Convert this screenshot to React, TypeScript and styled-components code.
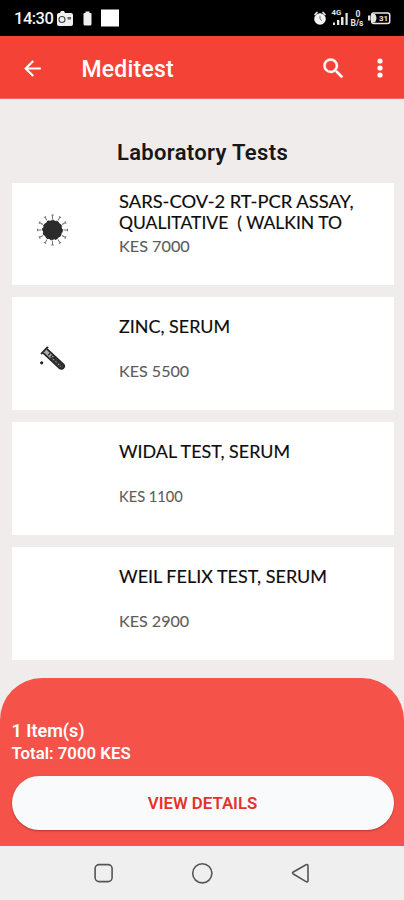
import React from 'react';
import styled, { createGlobalStyle } from 'styled-components';

const GlobalStyle = createGlobalStyle`
  * { box-sizing: border-box; }
  body { margin: 0; background: #efeceb; font-family: Roboto, sans-serif; }
`;

const Screen = styled.div`
  display: flex;
  flex-direction: column;
  width: 404px;
  height: 900px;
  overflow: hidden;
  background: #efeceb;
`;

const StatusBar = styled.div`
  display: flex;
  justify-content: space-between;
  height: 36px;
  flex: none;
  background: #000;
  color: #f4f4f4;
`;

const StatusGroup = styled.div`
  display: flex;
  align-items: center;
  height: 36px;
`;

const Clock = styled.span`
  width: 42px;
  margin-left: 14px;
  font-size: 16.5px;
  line-height: 38px;
  padding-top: 2px;
  font-weight: 500;
  letter-spacing: -0.5px;
  white-space: nowrap;
`;

const AppBar = styled.header`
  display: flex;
  align-items: center;
  height: 63px;
  flex: none;
  padding: 2px 14px 0 20px;
  background: #f44336;
  border-bottom: 1px solid #f2695d;
  color: #fff;
`;

const AppTitle = styled.h1`
  flex: 1;
  margin: 3px 0 0 36.5px;
  font-size: 23px;
  font-weight: 500;
  line-height: 28px;
  letter-spacing: 0.2px;
`;

const SearchIcon = styled.svg`
  margin-right: 23.5px;
`;

const Content = styled.main`
  flex: none;
  height: 579px;
  padding: 37px 10.5px 0 11.5px;
`;

const Heading = styled.h2`
  margin: 0 0 15px;
  height: 32px;
  line-height: 33px;
  text-align: center;
  font-size: 22px;
  font-weight: 600;
  letter-spacing: 0.33px;
  color: #171717;
`;

const List = styled.div`
  display: flex;
  flex-direction: column;
  gap: 11.5px;
`;

const Card = styled.article<{ $compact?: boolean }>`
  display: flex;
  height: ${p => (p.$compact ? 102 : 113.5)}px;
  background: #fff;
`;

const Thumb = styled.div<{ $compact?: boolean }>`
  width: 107px;
  flex: none;
  padding: ${p => (p.$compact ? '29px 0 0 23px' : '49px 0 0 26px')};
`;

const Details = styled.div<{ $compact?: boolean }>`
  display: flex;
  flex-direction: column;
  gap: ${p => (p.$compact ? 2 : 23)}px;
  padding-top: ${p => (p.$compact ? 8 : 19)}px;
`;

const TestName = styled.div`
  display: flex;
  flex-direction: column;
`;

const Line = styled.span<{ $stretch: number }>`
  height: 21px;
  line-height: 22px;
  font-family: Lato, sans-serif;
  font-size: 16.8px;
  font-weight: 400;
  color: #0c0c0c;
  -webkit-text-stroke: 0.15px #0c0c0c;
  white-space: pre;
  transform: scaleX(${p => p.$stretch});
  transform-origin: left;
`;

const Price = styled.span<{ $stretch: number }>`
  height: 22px;
  line-height: 23px;
  font-family: Lato, sans-serif;
  font-size: 14.5px;
  color: #5c5c5c;
  -webkit-text-stroke: 0.1px #5c5c5c;
  white-space: pre;
  transform: scaleX(${p => p.$stretch});
  transform-origin: left;
`;

const CartSheet = styled.section`
  height: 168px;
  flex: none;
  padding: 41px 10.5px 0 11.5px;
  background: #f5534a;
  border-radius: 42px 42px 0 0;
  color: #fff;
`;

const CartLine = styled.div<{ $size: number }>`
  height: 23px;
  line-height: 23px;
  font-size: ${p => p.$size}px;
  font-weight: 600;
`;

const ViewButton = styled.button`
  display: block;
  width: 100%;
  height: 54.5px;
  margin-top: 10.5px;
  padding: 0;
  border: 0;
  border-radius: 28px;
  background: #f8fafc;
  box-shadow: 0 1px 2px rgba(110, 20, 10, 0.45);
  color: #e6332a;
  font: 600 16.8px Roboto, sans-serif;
`;

const NavBar = styled.nav`
  display: flex;
  justify-content: center;
  align-items: center;
  gap: 75px;
  height: 54px;
  flex: none;
  background: #efefef;
`;

const Virus = () => (
  <svg width="36" height="36" viewBox="-17.5 -18 36 36">
    <g stroke="#777" strokeWidth="1" fill="none">
      {Array.from({ length: 12 }, (_, i) => (
        <path key={i} d="M0-11V-15M-1.3-15H1.3" transform={`rotate(${i * 30})`} />
      ))}
    </g>
    <circle r="9.8" fill="#2b2b2b" stroke="#111" strokeWidth="1" strokeDasharray="2.6 2.4" />
  </svg>
);

const Tube = () => (
  <svg width="30" height="28" viewBox="0 0 30 28">
    <g transform="translate(6.5 4.5) rotate(43)">
      <path d="M0-5V5" stroke="#222" strokeWidth="2" />
      <path d="M1-2.8H23A2.8 2.8 0 0 1 23 2.8H1" fill="#aaa" stroke="#222" strokeWidth="1.7" />
      <path d="M11-2.5H23A2.5 2.5 0 0 1 23 2.5H9Z" fill="#333" />
      <path d="M6-2V1M9-2V1M13-2V1M17-2V1" stroke="#222" strokeWidth="1.2" />
      <path d="M12 0.5H23" stroke="#aaa" strokeWidth="1" strokeDasharray="1.5 2" />
    </g>
    <circle cx="3.7" cy="16.8" r="1.6" fill="#222" />
  </svg>
);

const LeftStatusIcons = () => (
  <svg width="66" height="22" viewBox="0 0 66 22" fill="#f0f0f0">
    <path d="M1 8Q1 6 3 6H4L5 4H8L9 6H15Q17 6 17 8V17Q17 19 15 19H3Q1 19 1 17Z" />
    <circle cx="6" cy="12.5" r="3" fill="none" stroke="#444" strokeWidth="1.1" />
    <path d="M11.5 10H15V12.5H11.5Z" fill="#666" />
    <path d="M29.5 4.5H33.5V6H34.5Q35.5 6 35.5 7V17Q35.5 18.5 34 18.5H29Q27.5 18.5 27.5 17V7Q27.5 6 28.5 6H29.5Z" />
    <path d="M45 2.5H63V19.5H45Z" fill="#fff" />
  </svg>
);

const RightStatusIcons = () => (
  <svg width="91" height="36" viewBox="313 0 91 36" fill="#e4e4e4">
    <circle cx="320" cy="19" r="5.8" fill="#f4f4f4" />
    <path d="M314.5 15L317.5 12M322.5 12L325.5 15" stroke="#eee" strokeWidth="1.6" />
    <path d="M320 15.5V19L322 20.5" fill="none" stroke="#777" strokeWidth="1" />
    <text x="331.5" y="15.2" fontFamily="Roboto, sans-serif" fontSize="7.8" fontWeight="700">4G</text>
    <path d="M333 22.5H335V25H333ZM337 20H339.3V25H337ZM341 17H343.5V25H341ZM345.5 13H347.7V25H345.5Z" />
    <text x="355.5" y="17.4" fontFamily="Roboto, sans-serif" fontSize="8.5" fontWeight="700">0</text>
    <text x="350.5" y="26" fontFamily="Roboto, sans-serif" fontSize="8.5" fontWeight="700">B/s</text>
    <path d="M368 15.5H370.5V20.5H368Z" />
    <rect x="371.7" y="13" width="18" height="10.5" rx="2" fill="none" stroke="#e8e8e8" strokeWidth="1.5" />
    <path d="M372 14H375Q378 18 375 22.5H372Z" />
    <text x="379" y="21.3" fontFamily="Roboto, sans-serif" fontSize="8" fontWeight="700">31</text>
  </svg>
);

const tests = [
  { name: [{ text: 'SARS-COV-2 RT-PCR ASSAY,', stretch: 1.094 }, { text: 'QUALITATIVE  ( WALKIN TO', stretch: 1.043 }], price: 'KES 7000', priceStretch: 1.12, icon: <Virus />, compact: true },
  { name: [{ text: 'ZINC, SERUM', stretch: 1.067 }], price: 'KES 5500', priceStretch: 1.11, icon: <Tube /> },
  { name: [{ text: 'WIDAL TEST, SERUM', stretch: 1.066 }], price: 'KES 1100', priceStretch: 1.01 },
  { name: [{ text: 'WEIL FELIX TEST, SERUM', stretch: 1.072 }], price: 'KES 2900', priceStretch: 1.11 },
];

export default function App() {
  return (
    <>
      <GlobalStyle />
      <Screen>
        <StatusBar>
          <StatusGroup>
            <Clock>14:30</Clock>
            <LeftStatusIcons />
          </StatusGroup>
          <StatusGroup>
            <RightStatusIcons />
          </StatusGroup>
        </StatusBar>
        <AppBar>
          <svg width="25" height="25" viewBox="0 0 24 24" fill="#fff">
            <path d="M20 11H7.83l5.59-5.59L12 4l-8 8 8 8 1.41-1.41L7.83 13H20v-2z" />
          </svg>
          <AppTitle>Meditest</AppTitle>
          <SearchIcon width="27" height="27" viewBox="0 0 24 24" fill="#fff" stroke="#fff" strokeWidth="0.3">
            <path d="M15.5 14h-.79l-.28-.27A6.47 6.47 0 0 0 16 9.5 6.5 6.5 0 1 0 9.5 16c1.61 0 3.09-.59 4.23-1.57l.27.28v.79l5 4.99L20.49 19l-4.99-5zm-6 0C7.01 14 5 11.99 5 9.5S7.01 5 9.5 5 14 7.01 14 9.5 11.99 14 9.5 14z" />
          </SearchIcon>
          <svg width="20" height="28" viewBox="0 0 20 28" fill="#fff">
            <circle cx="10" cy="7" r="2.6" />
            <circle cx="10" cy="14" r="2.6" />
            <circle cx="10" cy="21" r="2.6" />
          </svg>
        </AppBar>
        <Content>
          <Heading>Laboratory Tests</Heading>
          <List>
            {tests.map(t => (
              <Card key={t.price} $compact={t.compact}>
                <Thumb $compact={t.compact}>{t.icon}</Thumb>
                <Details $compact={t.compact}>
                  <TestName>
                    {t.name.map(l => (
                      <Line key={l.text} $stretch={l.stretch}>{l.text}</Line>
                    ))}
                  </TestName>
                  <Price $stretch={t.priceStretch}>{t.price}</Price>
                </Details>
              </Card>
            ))}
          </List>
        </Content>
        <CartSheet>
          <CartLine $size={18}>1 Item(s)</CartLine>
          <CartLine $size={16.8}>Total: 7000 KES</CartLine>
          <ViewButton>VIEW DETAILS</ViewButton>
        </CartSheet>
        <NavBar>
          <svg width="24" height="24" viewBox="0 0 24 24" fill="none" stroke="#555" strokeWidth="1.6">
            <rect x="4.1" y="3.6" width="17" height="17" rx="4" />
          </svg>
          <svg width="24" height="24" viewBox="0 0 24 24" fill="none" stroke="#555" strokeWidth="1.6">
            <circle cx="12.3" cy="12.3" r="9.6" />
          </svg>
          <svg width="24" height="24" viewBox="0 0 24 24" fill="none" stroke="#555" strokeWidth="1.6">
            <path d="M4.3 11Q2.9 12 4.3 13L17 20.6Q19 21.4 19 19.4V4.9Q19 2.9 17 3.7Z" />
          </svg>
        </NavBar>
      </Screen>
    </>
  );
}
